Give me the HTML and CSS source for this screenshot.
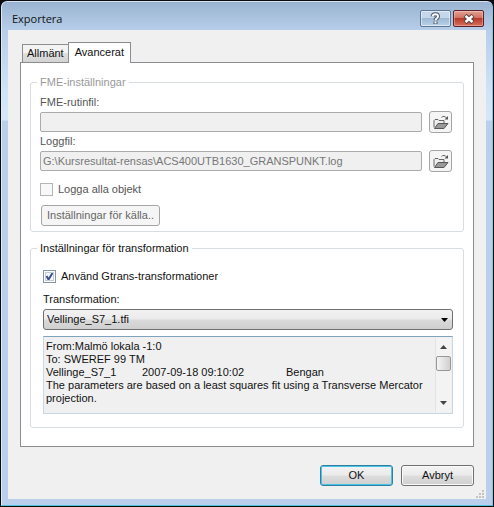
FILE: index.html
```html
<!DOCTYPE html>
<html lang="sv">
	<head>
		<meta charset="UTF-8" />
		<meta name="viewport" content="initial-scale=1,width=device-width" />
		<title>Exportera</title>
		<link rel="stylesheet" href="styles.css">
	</head>

	<body>
		<svg class="sprite" aria-hidden="true">
			<symbol id="folder" viewBox="0 0 16 15">
				<path d="M1 12.5V5.500l1-1h3l1 1h5v2.500" fill="#eee" stroke="#666" />
				<path d="M1.500 13.500l3.500-5h10l-4 5z" fill="#999" stroke="#555" />
				<path d="M8.500 2.500c1-1.500 4-1.500 5 .5" fill="none" stroke="#666" />
				<path d="M15 1v3.500h-3.500z" fill="#555" />
			</symbol>
		</svg>

		<div class="window">
			<header class="title-bar">
				<h1 class="title">Exportera</h1>
				<button class="title-button" type="button" aria-label="Hjälp">
					<svg width="11" height="13" viewBox="0 0 11 13">
						<path d="M2.500 4.500C3 1.500 8 1.500 8 4.500C8 6.500 5.500 6 5.500 8.500M5.500 9.500v2.500" fill="none" stroke="#48576a" stroke-width="4" />
						<path d="M2.500 4.500C3 1.500 8 1.500 8 4.500C8 6.500 5.500 6 5.500 8.500M5.500 9.500v2" fill="none" stroke="#fff" stroke-width="2" />
					</svg>
				</button>
				<button class="title-button title-button_close" type="button" aria-label="Stäng">
					<svg width="12" height="10" viewBox="0 0 12 10">
						<path d="M2 1.500l8 7M10 1.500l-8 7" stroke="#544" stroke-width="4.500" />
						<path d="M2.500 2l7 6M9.500 2l-7 6" stroke="#fff" stroke-width="2.500" />
					</svg>
				</button>
			</header>

			<form class="client">
				<div class="tabs" role="tablist">
					<button class="tab" type="button" role="tab" aria-selected="false">Allmänt</button>
					<button class="tab tab_active" type="button" role="tab" aria-selected="true">Avancerat</button>
				</div>

				<div class="panel" role="tabpanel">
					<fieldset class="group group_fme">
						<legend class="legend legend_disabled">FME-inställningar</legend>
						<label class="label label_muted" for="routine">FME-rutinfil:</label>
						<div class="file-row">
							<input class="file-input" id="routine" type="text" disabled>
							<button class="browse" type="button" aria-label="Bläddra efter rutinfil">
								<svg width="16" height="15"><use href="#folder" /></svg>
							</button>
						</div>
						<label class="label label_muted" for="log">Loggfil:</label>
						<div class="file-row">
							<input class="file-input" id="log" type="text" value="G:\Kursresultat-rensas\ACS400UTB1630_GRANSPUNKT.log" disabled>
							<button class="browse" type="button" aria-label="Bläddra efter loggfil">
								<svg width="16" height="15"><use href="#folder" /></svg>
							</button>
						</div>
						<label class="check check_muted"><input class="check-box" type="checkbox" disabled>Logga alla objekt</label>
						<button class="source-button" type="button" disabled>Inställningar för källa..</button>
					</fieldset>

					<fieldset class="group group_transform">
						<legend class="legend">Inställningar för transformation</legend>
						<label class="check"><input class="check-box" type="checkbox" checked>Använd Gtrans-transformationer</label>
						<label class="label" for="transformation">Transformation:</label>
						<select class="select" id="transformation">
							<option>Vellinge_S7_1.tfi</option>
						</select>
						<div class="info">
							<textarea class="info-text" aria-label="Beskrivning" readonly>From:Malmö lokala -1:0
To: SWEREF 99 TM
Vellinge_S7_1&#9;2007-09-18 09:10:02&#9;Bengan
The parameters are based on a least squares fit using a Transverse Mercator projection.</textarea>
							<div class="scrollbar" aria-hidden="true">
								<svg class="scroll-arrow" width="7" height="4"><path d="M0 4l3.500-4L7 4z" fill="#444" /></svg>
								<div class="scroll-thumb"></div>
								<svg class="scroll-arrow scroll-arrow_down" width="7" height="4"><path d="M0 0l3.500 4L7 0z" fill="#444" /></svg>
							</div>
						</div>
					</fieldset>
				</div>

				<div class="actions">
					<button class="button button_default" type="submit">OK</button>
					<button class="button" type="button">Avbryt</button>
				</div>
				<svg class="grip" width="8" height="8" aria-hidden="true">
					<path d="M6 0h2v2H6zM3 3h2v2H3zM6 3h2v2H6zM0 6h2v2H0zM3 6h2v2H3zM6 6h2v2H6z" fill="#c4c4c4" />
				</svg>
			</form>
		</div>
	</body>
</html>
```

FILE: styles.css
```css
*,
*::after,
*::before {
	box-sizing: border-box;
}

body {
	margin: 0;
	background-color: #0b0b10;
	color: #111;
	font-family: "Liberation Sans", Arial, sans-serif;
	font-size: 11px;
	line-height: 13px;
}

button,
input,
select,
textarea {
	margin: 0;
	color: inherit;
	font: inherit;
}

.sprite {
	display: none;
}

.window {
	display: flex;
	flex-direction: column;
	min-height: calc(100vh - 2px);
	margin: 1px;
	padding: 0 6px 6px;
	border: 1px solid #7fc4e0;
	border-top-color: #d5e3f2;
	border-left-color: #dcebf8;
	border-bottom-color: #4cc3dc;
	border-radius: 6px 6px 0 0;
	background: linear-gradient(#9ab3d0, #b6cee9 28px, #cfe4f7 90px, #d4e8f9 118px, #b9d0ea 119px, #bacfec);
}

.title-bar {
	display: flex;
	align-items: flex-start;
	gap: 2px;
	height: 28px;
	padding: 8px 2px 0 4px;
}

.title {
	flex: 1;
	margin: 2px 0 0;
	font-family: "Open Sans", "Noto Sans", sans-serif;
	font-size: 11px;
	font-weight: 400;
	line-height: 13px;
}

.title-button {
	display: flex;
	align-items: center;
	justify-content: center;
	width: 31px;
	height: 17px;
	padding: 0;
	border: 1px solid #5f7694;
	border-radius: 2px;
	background: linear-gradient(#c5d7ea 48%, #9fb9d5 50%, #bad3ea);
	box-shadow: inset 0 0 0 1px rgb(255 255 255 / 50%);
}

.title-button_close {
	border-color: #5c2029;
	background: linear-gradient(#e3a093, #d27060 48%, #b83a28 50%, #d8705a);
	box-shadow: inset 0 0 0 1px rgb(255 255 255 / 30%);
}

.client {
	display: flex;
	flex: 1;
	flex-direction: column;
	padding: 12px 12px 0;
	background-color: #f0f0f0;
}

.tabs {
	display: flex;
	align-items: flex-end;
	padding-left: 2px;
}

.tab {
	height: 18px;
	padding: 0 4px;
	border: 1px solid #8b8d91;
	border-bottom: 0;
	background: linear-gradient(#f3f3f3 45%, #dfdfdf 50%, #d2d2d2);
}

.tab_active {
	position: relative;
	height: 21px;
	margin: 0 0 -1px -1px;
	padding: 0 6px 2px;
	background: #fff;
}

.panel {
	flex: 1;
	padding: 13px 9px 18px;
	border: 1px solid #8b8d91;
	background-color: #fff;
}

.group {
	display: flex;
	flex-direction: column;
	align-items: stretch;
	min-width: 0;
	margin: 0;
	border: 1px solid #d7dde0;
	border-radius: 3px;
}

.group_fme {
	padding: 7px 11px 5px 9px;
}

.group_transform {
	margin-top: 10px;
	padding: 15px 10px 13px 12px;
}

.legend {
	margin-left: -3px;
	padding: 0 3px;
}

.group_transform .legend {
	margin-left: -6px;
}

.legend_disabled {
	color: #999;
}

.label_muted,
.check_muted {
	color: #555;
}

.file-row {
	display: flex;
	align-items: center;
	gap: 7px;
	margin: 2px 0;
}

.file-input {
	flex: 1;
	min-width: 0;
	height: 20px;
	padding: 0 2px;
	border: 1px solid #a9abad;
	border-radius: 2px;
	background-color: #f0f0f0;
	color: #777;
}

.browse {
	display: flex;
	align-items: center;
	justify-content: center;
	width: 23px;
	height: 22px;
	padding: 0;
	border: 1px solid #a5a5a5;
	border-radius: 3px;
	background-color: #f5f5f5;
}

.check {
	display: flex;
	align-items: center;
	gap: 5px;
}

.check-box {
	width: 13px;
	height: 13px;
	border: 1px solid #8794a3;
	background-color: #f4f7fb;
	box-shadow: inset 0 0 0 1px #fff, inset 0 0 0 2px #c3cbd6;
	appearance: none;
}

.check-box:checked {
	background-image: url("data:image/svg+xml,%3Csvg xmlns='http://www.w3.org/2000/svg' viewBox='0 0 11 11'%3E%3Cpath d='M2.500 5l2 3.500L8.500 2' fill='none' stroke='%233b4f8f' stroke-width='2'/%3E%3C/svg%3E");
}

.check-box:disabled {
	border-color: #b5b5b5;
	background-color: #f8f8f8;
	box-shadow: none;
}

.check_muted {
	margin: 9px 0;
}

.source-button {
	align-self: flex-start;
	height: 21px;
	margin-left: 1px;
	padding: 0 5px;
	border: 1px solid #a5a5a5;
	border-radius: 3px;
	background-color: #f5f5f5;
	color: #666;
}

.group_transform .label {
	margin: 10px 0 3px;
}

.select {
	height: 21px;
	padding: 0 20px 0 3px;
	border: 1px solid #707070;
	border-radius: 3px;
	background: url("data:image/svg+xml,%3Csvg xmlns='http://www.w3.org/2000/svg' width='7' height='4'%3E%3Cpath d='M0 0h7L3.500 4z'/%3E%3C/svg%3E") no-repeat right 4px center, linear-gradient(#f2f2f2, #ebebeb 48%, #dadada 52%, #cfcfcf);
	appearance: none;
}

.info {
	display: flex;
	height: 78px;
	margin-top: 6px;
	padding: 1px;
	border: 1px solid #c8d8e4;
	border-top-color: #7fa3bd;
	background-color: #f0f0f0;
}

.info-text {
	flex: 1;
	min-width: 0;
	padding: 2px 1px;
	border: 0;
	outline: 0;
	background: none;
	overflow: hidden;
	resize: none;
	tab-size: 48px;
}

.scrollbar {
	display: flex;
	flex-direction: column;
	align-items: center;
	width: 16px;
	padding: 7px 0;
	border-left: 1px solid #e3e3e3;
	background-color: #f3f3f3;
}

.scroll-thumb {
	width: 15px;
	height: 15px;
	margin-top: 7px;
	border: 1px solid #979797;
	border-radius: 2px;
	background: linear-gradient(90deg, #f5f5f5, #d0d0d0);
}

.scroll-arrow_down {
	margin-top: auto;
}

.actions {
	display: flex;
	justify-content: flex-end;
	gap: 8px;
	margin-top: 18px;
}

.button {
	width: 73px;
	height: 21px;
	padding: 0;
	border: 1px solid #707070;
	border-radius: 3px;
	background: linear-gradient(#f3f3f3, #ebebeb 48%, #dddddd 52%, #cfcfcf);
	box-shadow: inset 0 0 0 1px #fafafa;
}

.button_default {
	border-color: #2f7f9f;
	box-shadow: inset 0 0 0 1px #48c4e8;
}

.grip {
	align-self: flex-end;
	margin: 4px -10px 1px 0;
}
```
